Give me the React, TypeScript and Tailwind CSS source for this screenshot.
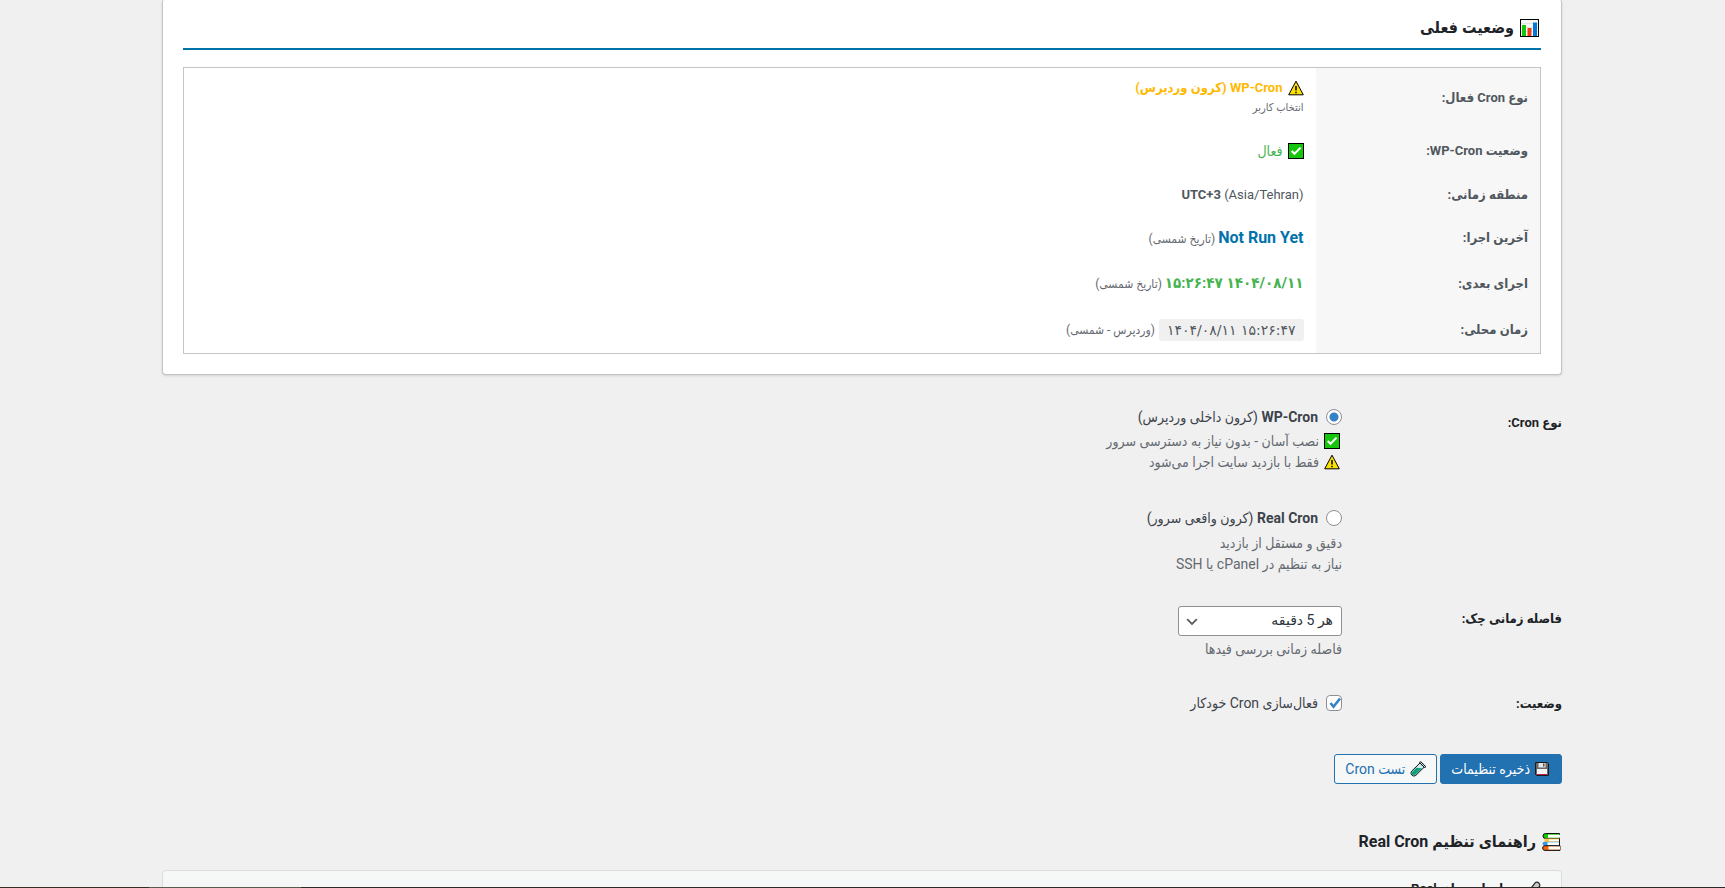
import React, { Fragment, useState } from "react";

const statusRows = [
  { id: "type", label: "نوع Cron فعال:", height: "h-[61px]" },
  { id: "wpcron", label: "وضعیت WP-Cron:", height: "h-[45px]" },
  { id: "timezone", label: "منطقه زمانی:", height: "h-[42px]" },
  { id: "last", label: "آخرین اجرا:", height: "h-[45px]" },
  { id: "next", label: "اجرای بعدی:", height: "h-[46px]" },
  { id: "local", label: "زمان محلی:", height: "h-[47px]" },
];

const ChartIcon = ({ className }: { className: string }) => (
  <svg viewBox="0 0 19 18" className={className} aria-hidden="true">
    <rect x="0.5" y="0.5" width="18" height="17" fill="#f6f6f6" stroke="#000" />
    <path d="M1 4.500h17M1 8.500h17M1 12.500h17" stroke="#d5d8dc" strokeWidth="0.6" />
    <rect x="2" y="6" width="4" height="11" fill="#16c60c" />
    <rect x="7.500" y="9" width="4" height="8" fill="#f03a17" />
    <rect x="13" y="3.500" width="4" height="13.500" fill="#0078d7" />
  </svg>
);

const WarningIcon = ({ className }: { className: string }) => (
  <svg viewBox="0 0 16 16" className={className} aria-hidden="true">
    <path d="M8 1.200L15.300 14.800H0.700Z" fill="#fce100" stroke="#000" strokeLinejoin="round" />
    <path d="M8 6v4.500M8 11.700v1.500" stroke="#000" strokeWidth="1.500" />
  </svg>
);

const CheckIcon = ({ className }: { className: string }) => (
  <svg viewBox="0 0 16 16" className={className} aria-hidden="true">
    <rect x="0.5" y="0.5" width="15" height="15" fill="#16c60c" stroke="#000" />
    <path d="M3.700 8L6.500 10.800L12.600 4.600" fill="none" stroke="#fff" strokeWidth="2" />
  </svg>
);

const FloppyIcon = ({ className }: { className: string }) => (
  <svg viewBox="0 0 14 14" className={className} aria-hidden="true">
    <path d="M0.500 0.500h12l1 1v12H1.500l-1-1z" fill="#686868" stroke="#1a1a1a" />
    <rect x="3.500" y="1" width="7" height="4.500" fill="#e6e6e6" />
    <rect x="8" y="1.500" width="1.500" height="3" fill="#555" />
    <rect x="2" y="7" width="10" height="5" fill="#f4f4f4" />
    <path d="M2 12.500h10" stroke="#c2184b" strokeWidth="1" />
  </svg>
);

const TubeIcon = ({ className }: { className: string }) => (
  <svg viewBox="0 0 16 16" className={className} aria-hidden="true">
    <path d="M10.200 1.800L1.600 10.200a3 3 0 0 0 4.200 4.200L14.300 6z" fill="#cdeef0" stroke="#111" strokeLinejoin="round" />
    <path d="M6.300 6.700L2.300 10.700a2.100 2.100 0 0 0 3 3L12 7.200z" fill="#10a37b" />
    <path d="M10.500 1.500l4.300 4.300" stroke="#111" strokeWidth="2.200" strokeLinecap="round" />
    <path d="M10.600 1.600l4.100 4.100" stroke="#c5e5ec" strokeWidth="1" strokeLinecap="round" />
  </svg>
);

const BooksIcon = ({ className }: { className: string }) => (
  <svg viewBox="0 0 19 18" className={className} aria-hidden="true">
    <path d="M3.500 0.500h14v5h-14a2 2 0 0 1 0-5z" fill="#16c60c" stroke="#111" />
    <path d="M6 1.700h12v3H6z" fill="#fff" />
    <path d="M4 5.500h13.500v3.500H4a1.700 1.700 0 0 1 0-3.500z" fill="#ffc83d" />
    <path d="M7 6.300h10.500v2H7z" fill="#fff" />
    <path d="M2.500 8.700h15v4h-15a2 2 0 0 1 0-4z" fill="#3a96dd" />
    <path d="M5.500 9.300h12v2.800h-12z" fill="#fff" />
    <path d="M17.500 5.500v7.500" stroke="#111" />
    <path d="M3 12.700h15v4.700H3a2.200 2.200 0 0 1 0-4.700z" fill="#f7630c" stroke="#111" />
    <path d="M6.500 13.500H18v3H6.500z" fill="#fff" />
  </svg>
);

const PenIcon = ({ className }: { className: string }) => (
  <svg viewBox="0 0 16 16" className={className} aria-hidden="true">
    <path d="M10.500 1.500a3 3 0 0 1 4 4L6 14l-4 1 1-4z" fill="#c8c8c8" stroke="#222" strokeWidth="1.200" />
  </svg>
);

const StatusValue = ({ id }: { id: string }) => {
  switch (id) {
    case "type":
      return (
        <Fragment>
          <div className="flex items-center gap-[5px] text-[13px] leading-5 font-bold text-[#ffb900]">
            <WarningIcon className="size-4" />
            <span>WP-Cron (کرون وردپرس)</span>
          </div>
          <small className="block text-[11px] leading-5 text-[#646970]">انتخاب کاربر</small>
        </Fragment>
      );
    case "wpcron":
      return (
        <div className="flex items-center gap-[5px] text-sm leading-5 text-[#46b450]">
          <CheckIcon className="size-4" />
          <span>فعال</span>
        </div>
      );
    case "timezone":
      return (
        <div className="text-[13px] leading-5">
          <strong>UTC+3</strong> (Asia/Tehran)
        </div>
      );
    case "last":
      return (
        <div className="text-xs leading-5 text-[#646970]">
          <strong className="text-base leading-5 text-[#0073aa]">Not Run Yet</strong> (تاریخ شمسی)
        </div>
      );
    case "next":
      return (
        <div className="text-xs leading-5 text-[#646970]">
          <strong className="text-[15px] leading-5 text-[#46b450]">۱۴۰۴/۰۸/۱۱ ۱۵:۲۶:۴۷</strong> (تاریخ شمسی)
        </div>
      );
    default:
      return (
        <div className="flex items-center gap-1 text-xs leading-5 text-[#646970]">
          <code dir="ltr" className="rounded-[3px] bg-[#f0f0f0] px-2 py-px font-['DejaVu_Sans',sans-serif] text-sm leading-5 text-[#50575e]">
            ۱۴۰۴/۰۸/۱۱ ۱۵:۲۶:۴۷
          </code>
          <span>(وردپرس - شمسی)</span>
        </div>
      );
  }
};

const App = () => {
  const [cronType, setCronType] = useState("wp");
  const [enabled, setEnabled] = useState(true);

  return (
    <div dir="rtl" className="flex h-screen flex-col overflow-hidden bg-[#f0f0f1] font-[Roboto,'DejaVu_Sans_Condensed','DejaVu_Sans',sans-serif] text-sm text-[#3c434a]">
      <div className="min-h-0 flex-1 overflow-hidden ps-px">
        <main className="mx-auto w-full max-w-[1400px]">
          <section className="rounded-t-[2px] rounded-b-[4px] border border-t-0 border-[#c3c4c7] bg-white px-5 pb-5 shadow-sm">
            <h2 className="flex h-[50px] items-center gap-1.5 border-b-2 border-[#0073aa] pt-2 text-base font-bold text-[#1d2327]">
              <ChartIcon className="ms-0.5 h-[18px] w-[19px]" />
              <span>وضعیت فعلی</span>
            </h2>
            <table className="mt-[17px] w-full border border-[#c3c4c7] text-[#50575e]">
              <tbody>
                {statusRows.map((row) => (
                  <tr key={row.id} className={row.height}>
                    <th scope="row" className="w-[225px] bg-[#f7f7f7] px-3 text-start text-[13px] leading-5 font-bold">
                      {row.label}
                    </th>
                    <td className="px-3">
                      <StatusValue id={row.id} />
                    </td>
                  </tr>
                ))}
              </tbody>
            </table>
          </section>

          <form onSubmit={(e) => e.preventDefault()}>
            <div className="flex pt-8">
              <div id="cron-type" className="w-[220px] pt-1.5 text-[13px] leading-5 font-bold text-[#1d2327]">
                نوع Cron:
              </div>
              <div role="radiogroup" aria-labelledby="cron-type">
                <label className="flex items-center gap-2 leading-5">
                  <input
                    type="radio"
                    name="cron_type"
                    checked={cronType === "wp"}
                    onChange={() => setCronType("wp")}
                    className="size-4 appearance-none rounded-full border border-[#8c8f94] bg-white checked:bg-[radial-gradient(circle,#3582c4_4px,#fff_5px)]"
                  />
                  <span>
                    <strong>WP-Cron</strong> (کرون داخلی وردپرس)
                  </span>
                </label>
                <p className="mt-[3px] text-[#646970]">
                  <span className="flex h-[21px] items-center gap-[5px]">
                    <CheckIcon className="ms-0.5 size-4" />
                    نصب آسان - بدون نیاز به دسترسی سرور
                  </span>
                  <span className="flex h-[21px] items-center gap-[5px]">
                    <WarningIcon className="ms-0.5 size-4" />
                    فقط با بازدید سایت اجرا می‌شود
                  </span>
                </p>
                <label className="mt-9 flex items-center gap-2 leading-5">
                  <input
                    type="radio"
                    name="cron_type"
                    checked={cronType === "real"}
                    onChange={() => setCronType("real")}
                    className="size-4 appearance-none rounded-full border border-[#8c8f94] bg-white checked:bg-[radial-gradient(circle,#3582c4_4px,#fff_5px)]"
                  />
                  <span>
                    <strong>Real Cron</strong> (کرون واقعی سرور)
                  </span>
                </label>
                <p className="mt-1 text-[#646970]">
                  <span className="flex h-[21px] items-center">دقیق و مستقل از بازدید</span>
                  <span className="flex h-[21px] items-center">نیاز به تنظیم در cPanel یا SSH</span>
                </p>
              </div>
            </div>

            <div className="flex pt-8">
              <label htmlFor="interval" className="w-[220px] pt-[3px] text-[13px] leading-5 font-bold text-[#1d2327]">
                فاصله زمانی چک:
              </label>
              <div>
                <div className="relative w-[164px]">
                  <select
                    id="interval"
                    className="block h-[30px] w-full appearance-none rounded-[3px] border border-[#8c8f94] bg-white ps-2 pe-6 pb-0.5 font-[Roboto,'DejaVu_Sans',sans-serif] text-sm text-[#2c3338]"
                  >
                    <option>هر 5 دقیقه</option>
                  </select>
                  <svg viewBox="0 0 20 20" className="pointer-events-none absolute end-1.5 top-2 size-4" aria-hidden="true">
                    <path d="M5 6l5 5 5-5 2 1-7 7-7-7z" fill="#555" />
                  </svg>
                </div>
                <p className="mt-[3px] leading-5 text-[#646970]">فاصله زمانی بررسی فیدها</p>
              </div>
            </div>

            <div className="flex pt-[33px]">
              <div className="w-[220px] pt-0.5 text-[13px] leading-5 font-bold text-[#1d2327]">وضعیت:</div>
              <label className="flex items-center gap-2 leading-5">
                <span className="grid">
                  <input
                    type="checkbox"
                    checked={enabled}
                    onChange={(e) => setEnabled(e.target.checked)}
                    className="col-start-1 row-start-1 size-4 appearance-none rounded-[4px] border border-[#8c8f94] bg-white"
                  />
                  {enabled && (
                    <svg viewBox="0 0 16 16" className="pointer-events-none col-start-1 row-start-1 size-4" aria-hidden="true">
                      <path d="M4.500 8l3 3.700L14 3.500" fill="none" stroke="#3582c4" strokeWidth="2.600" />
                    </svg>
                  )}
                </span>
                <span>فعال‌سازی Cron خودکار</span>
              </label>
            </div>

            <div className="flex gap-[3px] pt-10">
              <button type="submit" className="flex h-[30px] items-center gap-[5px] rounded-[3px] border border-[#2271b1] bg-[#2271b1] ps-3 pe-2.5 text-sm text-white">
                <FloppyIcon className="size-3.5" />
                ذخیره تنظیمات
              </button>
              <button type="button" className="flex h-[30px] items-center gap-[5px] rounded-[3px] border border-[#2271b1] bg-[#f6f7f7] px-2.5 text-sm text-[#2271b1]">
                <TubeIcon className="size-4" />
                تست Cron
              </button>
            </div>
          </form>

          <h2 className="mt-11 flex h-7 items-center gap-1.5 text-base font-bold text-[#1d2327]">
            <BooksIcon className="ms-px h-[18px] w-[19px]" />
            <span>راهنمای تنظیم Real Cron</span>
          </h2>
          <section className="mt-3.5 rounded-[4px] border border-[#dcdcde] bg-[#f6f7f7] px-5 pt-2 pb-5">
            <h3 className="flex items-center gap-1.5 text-[13px] leading-5 font-bold text-[#1d2327]">
              <PenIcon className="size-4" />
              <span>تنظیمات برای Real</span>
            </h3>
          </section>
        </main>
      </div>
      <div className="flex h-px shrink-0">
        <div className="flex-1 bg-[#2e2b26]" />
        <div className="w-[152px] bg-[#5a5a50]" />
        <div className="w-[149px] bg-[#3a2a26]" />
      </div>
    </div>
  );
};

export default App;
